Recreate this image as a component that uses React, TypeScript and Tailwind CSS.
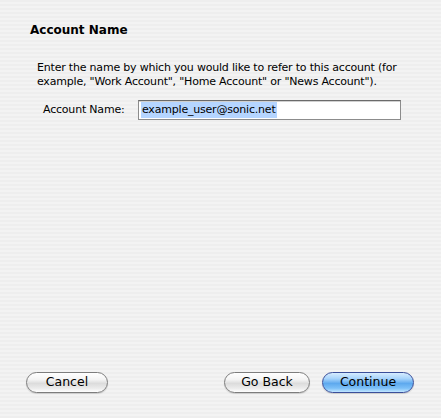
import React from "react";

const font = { fontFamily: '"DejaVu Sans", "Liberation Sans", sans-serif' };

function AquaButton({ label, primary, w }: { label: string; primary?: boolean; w: string }) {
  return (
    <div
      className={`relative h-[21px] ${w} rounded-full border flex items-center justify-center text-[12.5px] text-black overflow-hidden ${
        primary
          ? "border-[#3b4f9a] bg-[linear-gradient(to_bottom,#d6ecff_0%,#a6d3fb_30%,#5ea9ee_55%,#7cc0f8_80%,#c2e6ff_100%)]"
          : "border-[#7d7d7d] bg-[linear-gradient(to_bottom,#ffffff_0%,#f4f4f4_35%,#dcdcdc_55%,#ebebeb_80%,#ffffff_100%)]"
      } shadow-[0_1px_1px_rgba(0,0,0,0.15)]`}
      style={font}
    >
      <span className="relative">{label}</span>
    </div>
  );
}

export default function App() {
  return (
    <div
      className="w-[441px] h-[418px] flex flex-col bg-[repeating-linear-gradient(to_bottom,#eeeeee_0px,#eeeeee_2px,#f3f3f3_2px,#f3f3f3_4px)] text-black"
      style={font}
    >
      <div className="pl-[30px] pt-[22px] text-[12px] font-bold leading-[16px]">Account Name</div>
      <div className="pl-[37px] pt-[23px] text-[11px] leading-[14px] tracking-[-0.2px]">
        Enter the name by which you would like to refer to this account (for
        <br />
        example, "Work Account", "Home Account" or "News Account").
      </div>
      <div className="flex items-center pl-[43px] pt-[11px]">
        <div className="w-[95px] text-[11px] tracking-[-0.2px] pt-[1px]">Account Name:</div>
        <div className="w-[263px] h-[20px] bg-white border border-[#8c8c8c] border-t-[#6a6a6a] shadow-[inset_0_1px_0_#d0d0d0] flex items-center pl-[2px]">
          <span className="bg-[#b5d5ff] text-[11px] leading-[16px] px-[1px] tracking-[-0.2px]">example_user@sonic.net</span>
        </div>
      </div>
      <div className="flex-1" />
      <div className="flex items-center pl-[26px] pr-[27px] pb-[25px]">
        <AquaButton label="Cancel" w="w-[82px]" />
        <div className="flex-1" />
        <AquaButton label="Go Back" w="w-[86px]" />
        <div className="w-[12px]" />
        <AquaButton label="Continue" w="w-[92px]" primary />
      </div>
    </div>
  );
}
